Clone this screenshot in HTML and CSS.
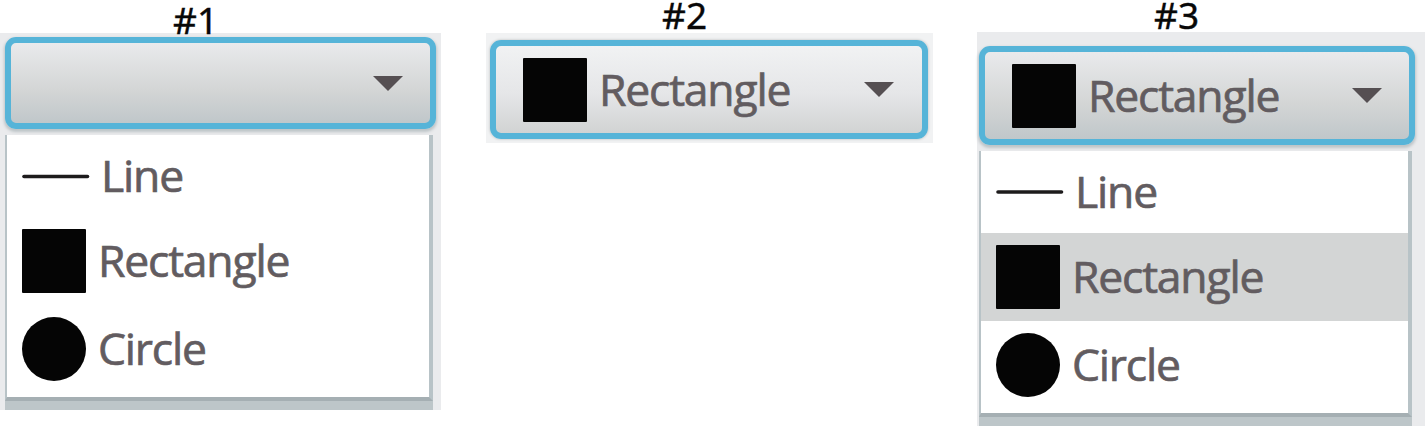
FILE: index.html
```html
<!DOCTYPE html>
<html lang="en">
<head>
<meta charset="utf-8">
<title>Shape combo box</title>
<link rel="stylesheet" href="styles.css">
</head>
<body>
<main class="states">
  <section class="state state-one">
    <h2 class="caption">#1</h2>
    <div class="shell">
      <div class="combo combo-pressed">
        <svg class="arrow" viewBox="0 0 32 17"><path d="M1 1H31L16 16Z"/></svg>
      </div>
      <ul class="popup">
        <li class="option option-line"><svg class="icon" viewBox="0 0 64 64"><path class="stroke" d="M2 32.5H65.500"/></svg><span class="text">Line</span></li>
        <li class="option"><svg class="icon" viewBox="0 0 64 64"><rect width="64" height="64" rx="1"/></svg><span class="text">Rectangle</span></li>
        <li class="option option-circle"><svg class="icon" viewBox="0 0 64 64"><circle cx="32" cy="32" r="32"/></svg><span class="text">Circle</span></li>
      </ul>
    </div>
  </section>
  <section class="state state-two">
    <h2 class="caption">#2</h2>
    <div class="shell">
      <div class="combo">
        <svg class="icon" viewBox="0 0 64 64"><rect width="64" height="64" rx="1"/></svg>
        <span class="text">Rectangle</span>
        <svg class="arrow" viewBox="0 0 32 17"><path d="M1 1H31L16 16Z"/></svg>
      </div>
    </div>
  </section>
  <section class="state state-three">
    <h2 class="caption">#3</h2>
    <div class="shell">
      <div class="combo combo-pressed">
        <svg class="icon" viewBox="0 0 64 64"><rect width="64" height="64" rx="1"/></svg>
        <span class="text">Rectangle</span>
        <svg class="arrow" viewBox="0 0 32 17"><path d="M1 1H31L16 16Z"/></svg>
      </div>
      <ul class="popup">
        <li class="option option-line"><svg class="icon" viewBox="0 0 64 64"><path class="stroke" d="M2 32H65.500"/></svg><span class="text">Line</span></li>
        <li class="option option-selected"><svg class="icon" viewBox="0 0 64 64"><rect width="64" height="64" rx="1"/></svg><span class="text">Rectangle</span></li>
        <li class="option option-circle"><svg class="icon" viewBox="0 0 64 64"><circle cx="32" cy="32" r="32"/></svg><span class="text">Circle</span></li>
      </ul>
    </div>
  </section>
</main>
</body>
</html>
```
FILE: styles.css
```css
* { box-sizing: border-box; }

body {
  margin: 0;
  background: #fff;
  font-family: "Open Sans", "Noto Sans", sans-serif;
}

.states {
  display: grid;
  grid-template-columns: 441px 447px 447px;
  column-gap: 45px;
  align-items: start;
  height: 428px;
}

.caption {
  margin: 0;
  height: 29px;
  color: #080808;
  font-family: "Noto Sans", sans-serif;
  font-size: 37px;
  font-weight: 400;
  line-height: 29px;
  -webkit-text-stroke: 0.4px #080808;
}

.state-one .caption { height: 33px; line-height: 39px; padding-left: 173px; }
.state-two .caption { padding-left: 176px; }
.state-three .caption { padding-left: 176px; }

.shell { background: #eaebed; }
.state-one .shell { height: 377px; padding: 4px 5px 0 5px; }
.state-two .shell { height: 110px; margin-top: 4px; padding: 7px 5px 0 4px; background: #f1f2f3; }
.state-three .shell { height: 394px; margin-top: 3px; margin-left: -1px; padding: 14px 10px 0 2px; }

.combo {
  display: flex;
  align-items: center;
  height: 99px;
  padding: 0 27px;
  border: 6px solid #56b4d8;
  border-radius: 11px;
  background: linear-gradient(#f1f2f3, #e5e6e8 55%, #d1d3d3);
  box-shadow: 0 0 2px 1px #d5d7d8;
}

.combo-pressed {
  background: linear-gradient(#e9eaec, #d3d5d5 60%, #c0c7ca);
  box-shadow: 0 2px 3px 1px #bdc4c7;
}

.state-one .combo { height: 92px; padding-right: 26px; }
.state-three .combo { padding-right: 26px; }

.icon {
  flex: none;
  width: 64px;
  height: 64px;
  overflow: visible;
  fill: #050505;
}

.stroke {
  fill: none;
  stroke: #1d1b1c;
  stroke-width: 3.6;
  stroke-linecap: round;
}

.arrow {
  width: 32px;
  height: 17px;
  margin-left: auto;
  fill: #554f52;
}

.text {
  margin-left: 12px;
  padding-bottom: 2px;
  color: #625c60;
  font-size: 44.5px;
  line-height: 64px;
  letter-spacing: -1.2px;
  -webkit-text-stroke: 0.7px #625c60;
}

.popup {
  margin: 6px 3px 0 0;
  padding: 0;
  list-style: none;
  height: 266px;
  border-style: solid;
  border-color: #b8c3c7 #b8c3c7 #a5afb3;
  border-width: 0 4px 4px 2px;
  background: #fff;
  box-shadow: 0 9px 0 #bdc6c9;
}

.option {
  display: flex;
  align-items: center;
  height: 88px;
  padding-left: 15px;
}

.option-line { height: 82px; }
.option-line .text { margin-left: 15px; }
.option-circle .text { margin-left: 12px; }
.option-selected { background: #d3d5d5; }
```
